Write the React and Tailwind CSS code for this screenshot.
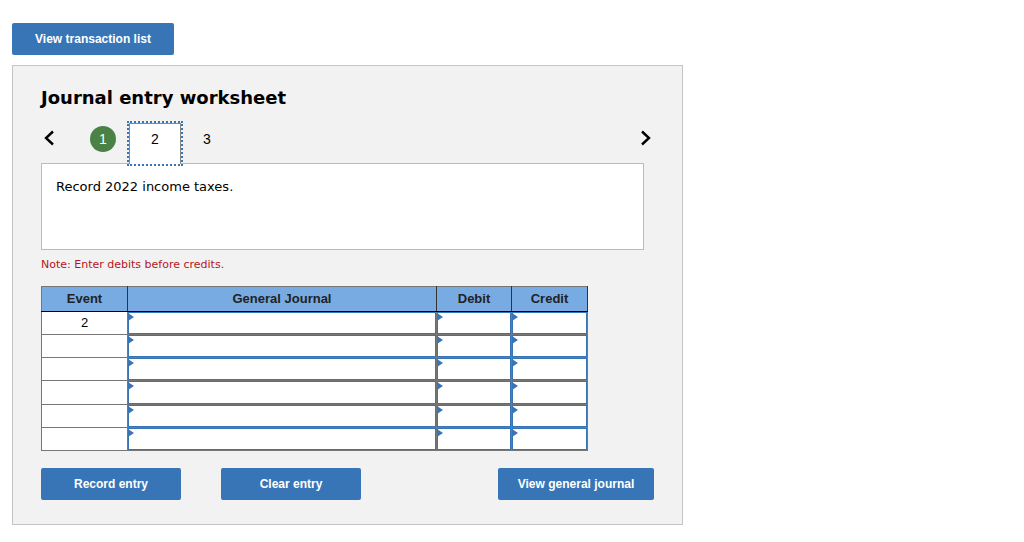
import React, { useState } from 'react';

const TABS = [1, 2, 3];
const ROWS = ['2', '', '', '', '', ''];
const FIELDS = ['General Journal', 'Debit', 'Credit'];

const BlueButton = ({ className, children }) => (
  <button
    type="button"
    className={`h-8 rounded-xs bg-[#3875b7] text-xs font-bold text-white cursor-pointer hover:bg-[#2f659f] ${className}`}
  >
    {children}
  </button>
);

const Arrow = ({ d, label }) => (
  <button type="button" aria-label={label} className="w-4 cursor-pointer">
    <svg viewBox="0 0 16 16" className="w-4 h-4" fill="none" stroke="#000" strokeWidth="2.4">
      <path d={d} />
    </svg>
  </button>
);

const Tab = ({ number, active, done, onClick }) => {
  if (active) {
    return (
      <button
        type="button"
        aria-current="step"
        onClick={onClick}
        className="relative z-10 w-14 h-[45px] -mb-[3px] border-2 border-dotted border-[#3875b7] cursor-pointer"
      >
        <span className="flex justify-center w-full h-full pt-[5px] border border-b-0 border-[#888] bg-white">
          {number}
        </span>
      </button>
    );
  }

  return (
    <button
      type="button"
      onClick={onClick}
      className={`w-[26px] h-[26px] mt-[5px] mx-[11px] rounded-full cursor-pointer ${
        done ? 'bg-[#4a8245] text-white' : ''
      }`}
    >
      {number}
    </button>
  );
};

const EntryCell = ({ label }) => (
  <td className="relative h-[23px] p-0 border border-[#777]">
    <input
      type="text"
      aria-label={label}
      className="block w-full h-full px-2 border border-[#3875b7] bg-white outline-none"
    />
    {/* Drop-down marker in the corner of the cell */}
    <svg viewBox="0 0 6 8" className="absolute left-0 top-px w-[6px] h-2 pointer-events-none">
      <path d="M0 0 L6 4 L0 8 Z" fill="#3875b7" />
    </svg>
  </td>
);

const App = () => {
  const [current, setCurrent] = useState(2);

  return (
    <div className="px-3 pt-[23px] pb-4 font-['Liberation_Sans',Arial,sans-serif] text-sm text-black">
      <BlueButton className="w-[162px]">View transaction list</BlueButton>

      <main className="max-w-[671px] mt-[10px] px-7 pt-5 pb-6 border border-[#c4c4c4] bg-[#f2f2f2]">
        <h1 className="font-['DejaVu_Sans',Verdana,sans-serif] text-lg leading-6 font-bold">
          Journal entry worksheet
        </h1>

        <nav aria-label="Entries" className="flex items-start h-[42px] mt-[11px]">
          <div className="flex pt-[9px]">
            <Arrow label="Previous entry" d="M12 1.5 L5 8 L12 14.5" />
          </div>
          <div className="flex items-start ml-[22px]">
            {TABS.map((number) => (
              <Tab
                key={number}
                number={number}
                active={number === current}
                done={number === 1}
                onClick={() => setCurrent(number)}
              />
            ))}
          </div>
          <div className="flex pt-[9px] ml-auto">
            <Arrow label="Next entry" d="M4 1.5 L11 8 L4 14.5" />
          </div>
        </nav>

        <div className="h-[87px] mr-[10px] px-[14px] py-[14px] border border-[#bbb] bg-white font-['DejaVu_Sans',Verdana,sans-serif] text-[13px] leading-[18px]">
          Record 2022 income taxes.
        </div>
        <p className="mt-[7px] font-['DejaVu_Sans',Verdana,sans-serif] text-[11px] leading-4 text-[#b5161b]">
          Note: Enter debits before credits.
        </p>

        <table className="w-[547px] h-[165px] mt-[13px] table-fixed border-collapse bg-white text-[13px] leading-4">
          <thead>
            <tr className="h-[25px] bg-[#78abe2] text-[#222]">
              <th className="w-[86px] p-0 border border-[#777] border-b-black border-r-[#333]">Event</th>
              <th className="p-0 border border-[#777] border-b-black border-r-[#333]">General Journal</th>
              <th className="w-[75px] p-0 border border-[#777] border-b-black border-r-[#333]">Debit</th>
              <th className="w-[76px] p-0 border border-[#777] border-b-black border-r-[#333]">Credit</th>
            </tr>
          </thead>
          <tbody>
            {ROWS.map((event, i) => (
              <tr key={i}>
                <td className="h-[23px] p-0 border border-[#777] text-center">{event}</td>
                {FIELDS.map((field) => (
                  <EntryCell key={field} label={`${field}, line ${i + 1}`} />
                ))}
              </tr>
            ))}
          </tbody>
        </table>

        <div className="flex mt-[17px]">
          <BlueButton className="w-[140px]">Record entry</BlueButton>
          <BlueButton className="w-[140px] ml-10">Clear entry</BlueButton>
          <BlueButton className="w-[156px] ml-auto">View general journal</BlueButton>
        </div>
      </main>
    </div>
  );
};

export default App;
